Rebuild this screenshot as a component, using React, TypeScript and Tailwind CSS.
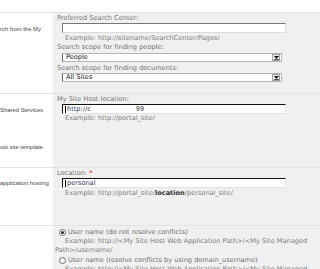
import React from "react";

function TextBox({ value, focused }: { value?: React.ReactNode; focused?: boolean }) {
  return (
    <div
      className={`ml-[9px] mt-[1px] h-[10px] w-[224px] bg-white border flex items-center pl-[2px] text-[#1a1a1a] leading-[8px] ${
        focused
          ? "border-t-[#111] border-l-[#111] border-r-[#e2e2e2] border-b-[#e2e2e2]"
          : "border-t-[#777] border-l-[#777] border-r-[#dcdcdc] border-b-[#dcdcdc]"
      }`}
    >
      {focused && <span className="w-px h-[7px] bg-black mr-[1px]" />}
      {value}
    </div>
  );
}

function Select({ value }: { value: string }) {
  return (
    <div className="ml-[9px] h-[9px] w-[220px] bg-white border border-[#b4b4b4] border-l-[#666] flex items-center">
      <span className="flex-1 pl-[3px] text-[#111] leading-[7px]">{value}</span>
      <span className="w-[8px] h-[7px] mr-[1px] bg-[#eeeeee] border border-[#a0a0a0] flex flex-col items-center justify-center">
        <svg width="5" height="4" viewBox="0 0 5 4">
          <path d="M0 0H5L2.5 3Z" fill="#111" />
          <rect x="0" y="3.3" width="5" height="0.7" fill="#111" />
        </svg>
      </span>
    </div>
  );
}

function Radio({ checked, label }: { checked?: boolean; label: string }) {
  return (
    <div className="flex items-center ml-[6px] leading-[8px]">
      <span className="w-[7px] h-[7px] rounded-full border border-[#6a6a6a] bg-white flex items-center justify-center mr-[2px]">
        {checked && <span className="w-[3px] h-[3px] rounded-full bg-[#222]" />}
      </span>
      <span>{label}</span>
    </div>
  );
}

export default function App() {
  return (
    <div className="w-[320px] h-[269px] overflow-hidden bg-white font-['DejaVu_Sans',sans-serif] text-[6.6px]">
      <div className="h-[13px] border-b border-[#e3e3e3]" />

      <div className="flex h-[81px] border-b border-[#e3e3e3]">
        <div className="w-[53px] shrink-0 pt-[12px] text-[#444] text-[5.9px] leading-[8px] whitespace-nowrap overflow-hidden font-['Liberation_Sans',sans-serif]">
          rch from the My
        </div>
        <div className="flex-1 bg-[#f0f0f0] pt-[1px] text-[#727272] leading-[8px]">
          <div className="pl-[4px]">Preferred Search Center:</div>
          <TextBox />
          <div className="pl-[12px] mt-[1px] text-[#7d7d7d]">Example: http://sitename/SearchCenter/Pages/</div>
          <div className="pl-[4px] mt-[1px]">Search scope for finding people:</div>
          <div className="mt-[2px]">
            <Select value="People" />
          </div>
          <div className="pl-[4px] mt-[2px]">Search scope for finding documents:</div>
          <div className="mt-[1px]">
            <Select value="All Sites" />
          </div>
        </div>
      </div>

      <div className="flex h-[74px] border-b border-[#e3e3e3]">
        <div className="w-[53px] shrink-0 pt-[12px] text-[#444] text-[5.9px] leading-[8px] whitespace-nowrap overflow-hidden font-['Liberation_Sans',sans-serif]">
          <div>Shared Services</div>
          <div className="mt-[29px]">ost site template.</div>
        </div>
        <div className="flex-1 bg-[#f0f0f0] pt-[1px] text-[#727272] leading-[8px]">
          <div className="pl-[4px]">My Site Host location:</div>
          <TextBox
            focused
            value={
              <span className="flex">
                <span className="text-[#2a3550]">http://c</span>
                <span className="w-[45px]" />
                <span className="text-[#444]">99</span>
              </span>
            }
          />
          <div className="pl-[12px] text-[#7d7d7d]">Example: http://portal_site/</div>
        </div>
      </div>

      <div className="flex h-[58px] border-b border-[#e3e3e3]">
        <div className="w-[53px] shrink-0 pt-[11px] text-[#444] text-[5.9px] leading-[8px] whitespace-nowrap overflow-hidden font-['Liberation_Sans',sans-serif]">
          application hosting
        </div>
        <div className="flex-1 bg-[#f0f0f0] pt-[1px] text-[#727272] leading-[8px]">
          <div className="pl-[4px]">
            Location: <span className="text-[#e00000]">*</span>
          </div>
          <TextBox focused value={<span className="text-[#2a3550]">personal</span>} />
          <div className="pl-[12px] mt-[1px] text-[#7d7d7d]">
            Example: http://portal_site/<b className="text-[#333]">location</b>/personal_site/
          </div>
        </div>
      </div>

      <div className="flex">
        <div className="w-[53px] shrink-0" />
        <div className="flex-1 bg-[#f0f0f0] pt-[2px] pr-[12px] text-[#6f6f6f] leading-[8px] h-[60px]">
          <Radio checked label="User name (do not resolve conflicts)" />
          <div className="pl-[2px] mt-[1px] indent-[10px] leading-[9px] text-[#7d7d7d]">
            Example: http://&lt;My Site Host Web Application Path&gt;/&lt;My Site Managed Path&gt;/username/
          </div>
          <div className="mt-[1px]">
            <Radio label="User name (resolve conflicts by using domain_username)" />
          </div>
          <div className="pl-[2px] mt-[1px] indent-[10px] leading-[9px] text-[#7d7d7d]">
            Example: http://&lt;My Site Host Web Application Path&gt;/&lt;My Site Managed Path&gt;/domain_username/
          </div>
        </div>
      </div>
    </div>
  );
}
